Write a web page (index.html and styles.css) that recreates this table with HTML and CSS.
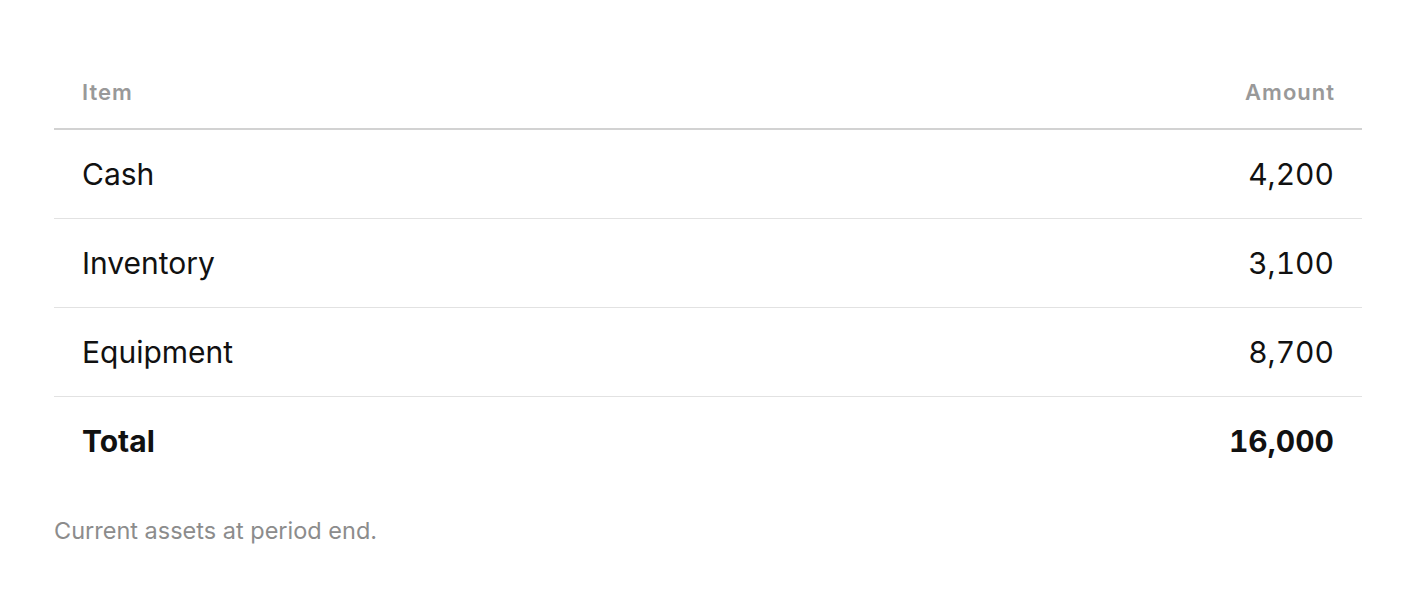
FILE: index.html
```html
<!DOCTYPE html>
<html lang="en">
<head>
    <meta charset="UTF-8">
    <meta name="viewport" content="width=device-width, initial-scale=1.0">
    <title>Current Assets</title>
    <link rel="stylesheet" href="styles.css">
</head>
<body>
    <table class="assets">
        <thead>
            <tr>
                <th>Item</th>
                <th class="num">Amount</th>
            </tr>
        </thead>
        <tbody>
            <tr>
                <td>Cash</td>
                <td class="num">4,200</td>
            </tr>
            <tr>
                <td>Inventory</td>
                <td class="num">3,100</td>
            </tr>
            <tr>
                <td>Equipment</td>
                <td class="num">8,700</td>
            </tr>
        </tbody>
        <tfoot>
            <tr>
                <td>Total</td>
                <td class="num">16,000</td>
            </tr>
        </tfoot>
    </table>

    <p class="caption">Current assets at period end.</p>
</body>
</html>
```

FILE: styles.css
```css
* {
    margin: 0;
    padding: 0;
    box-sizing: border-box;
}

body {
    background-color: #ffffff;
    color: #111111;
    font-family: 'Inter', 'Noto Sans', sans-serif;
    padding: 79px 54px 40px;
}

.assets {
    width: 100%;
    border-collapse: collapse;
}

.assets th {
    text-align: left;
    font-size: 22px;
    font-weight: 600;
    line-height: 26px;
    letter-spacing: 1px;
    color: #999999;
    padding: 0 28px 23px;
    border-bottom: 2px solid #d2d2d2;
}

.assets th.num {
    padding-right: 27px;
}

.assets td {
    font-size: 30px;
    line-height: 36px;
    padding: 26px 28px;
}

.assets tbody tr {
    border-bottom: 1px solid #e2e2e2;
}

.assets tfoot td {
    font-weight: 700;
}

.assets .num {
    text-align: right;
    font-variant-numeric: tabular-nums;
}

.caption {
    margin-top: 32px;
    font-size: 23.5px;
    line-height: 28px;
    color: #8c8c8c;
}
```
